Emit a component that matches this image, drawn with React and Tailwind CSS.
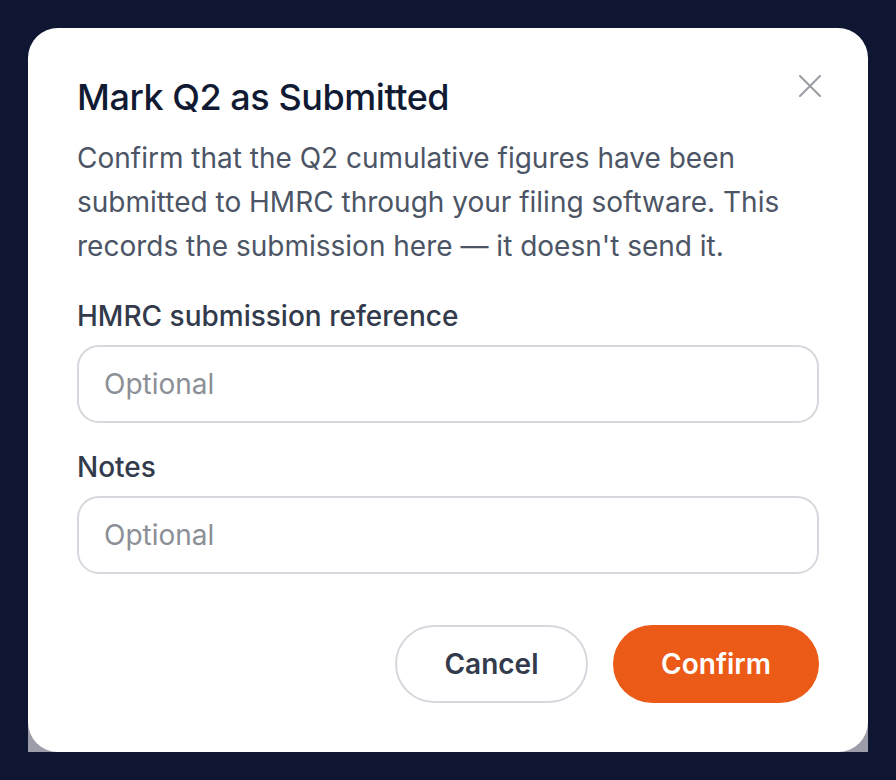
import React, { useState } from 'react';

const font = { fontFamily: 'Inter, "Noto Sans", sans-serif' };

// Small field block: label + rounded input
const Field = ({ label, value, onChange, className }) => (
  <div className={className}>
    <label className="block text-[28px] leading-[36px] font-medium text-[#323a4b]">{label}</label>
    <input
      value={value}
      onChange={(e) => onChange(e.target.value)}
      placeholder="Optional"
      className="mt-[11px] block w-full h-[78px] rounded-[22px] border-2 border-[#d7d8dd] bg-white px-[25px] text-[28px] text-[#1f2937] placeholder:text-[#8c8f96] outline-none"
    />
  </div>
);

const App = () => {
  const [reference, setReference] = useState('');
  const [notes, setNotes] = useState('');

  return (
    <div className="min-h-screen w-full bg-[#0f1632] p-[28px]" style={font}>
      {/* gray strip behind the bottom corners of the card */}
      <div className="bg-[linear-gradient(to_bottom,transparent_calc(100%-30px),#9c9da9_calc(100%-30px))]">
        <div className="relative h-[724px] rounded-[30px] bg-white px-[49px] pt-[47px]">
          <button className="absolute right-[47px] top-[47px] text-[#9a9ca4]" aria-label="Close">
            <svg width="22" height="22" viewBox="0 0 22 22" fill="none" stroke="currentColor" strokeWidth="2" strokeLinecap="round">
              <path d="M1 1L21 21M21 1L1 21" />
            </svg>
          </button>

          <h2 className="text-[36px] leading-[44px] font-medium tracking-[-0.45px] text-[#111a33]">Mark Q2 as Submitted</h2>
          <p className="mt-[17px] text-[28px] leading-[44px] text-[#4c5565]">
            Confirm that the Q2 cumulative figures have been submitted to HMRC through your filing software. This records the submission here — it doesn't send it.
          </p>

          <Field className="mt-[30px]" label="HMRC submission reference" value={reference} onChange={setReference} />
          <Field className="mt-[26px]" label="Notes" value={notes} onChange={setNotes} />

          <div className="mt-[51px] flex justify-end gap-[25px]">
            <button className="h-[78px] w-[193px] rounded-full border-2 border-[#d7d8dd] bg-white text-[28px] font-semibold text-[#323a4b]">
              Cancel
            </button>
            <button className="h-[78px] w-[206px] rounded-full bg-[#ec5a17] text-[28px] font-semibold text-white">
              Confirm
            </button>
          </div>
        </div>
      </div>
    </div>
  );
};

export default App;
